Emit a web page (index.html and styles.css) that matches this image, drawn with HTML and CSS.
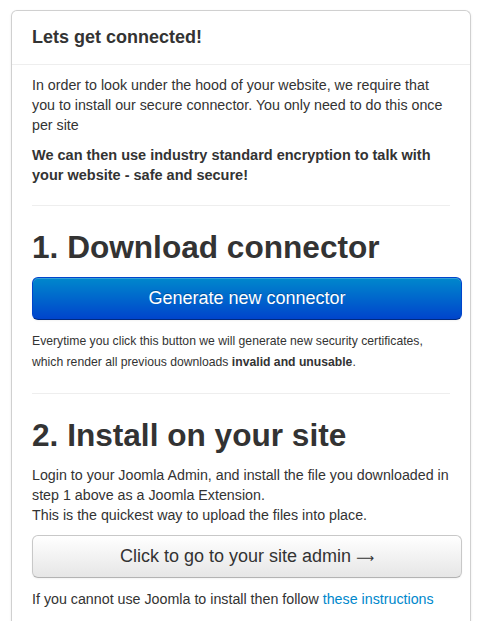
FILE: index.html
```html
<!DOCTYPE html>
<html lang="en">
<head>
    <meta charset="UTF-8">
    <meta name="viewport" content="width=device-width, initial-scale=1.0">
    <title>Lets get connected</title>
    <link rel="stylesheet" href="styles.css">
</head>
<body>
    <div class="panel">
        <div class="panel-header">Lets get connected!</div>
        <div class="panel-body">
            <p>In order to look under the hood of your website, we require that you to install our secure connector. You only need to do this once per site</p>
            <p class="strong">We can then use industry standard encryption to talk with your website - safe and secure!</p>
            <hr>
            <h1>1. Download connector</h1>
            <a href="#" class="btn btn-primary">Generate new connector</a>
            <p class="small">Everytime you click this button we will generate new security certificates, which render all previous downloads <b>invalid and unusable</b>.</p>
            <hr>
            <h1>2. Install on your site</h1>
            <p>Login to your Joomla Admin, and install the file you downloaded in step 1 above as a Joomla Extension.<br>This is the quickest way to upload the files into place.</p>
            <a href="#" class="btn">Click to go to your site admin <span class="arrow">&#10230;</span></a>
            <p class="last">If you cannot use Joomla to install then follow <a href="#" class="link">these instructions</a></p>
        </div>
    </div>
</body>
</html>
```

FILE: styles.css
```css
body {
    margin: 0;
    padding: 10px 9px 0 11px;
    font-family: "Liberation Sans", Arial, sans-serif;
    font-size: 14.25px;
    line-height: 20px;
    color: #333;
    background-color: #fff;
}
.panel {
    border: 1px solid #d0d0d0;
    border-bottom: none;
    border-radius: 6px 6px 0 0;
    box-shadow: 0 1px 3px rgba(0,0,0,0.08);
    height: 640px;
}
.panel-header {
    height: 53px;
    line-height: 53px;
    padding: 0 20px;
    font-size: 18px;
    font-weight: bold;
    border-bottom: 1px solid #eee;
}
.panel-body {
    padding: 10px 20px 0 20px;
}
p {
    margin: 0 0 10px;
}
.strong {
    font-weight: bold;
    font-size: 14.5px;
}
hr {
    border: 0;
    border-top: 1px solid #eee;
    margin: 20px 0 21px;
}
h1 {
    font-size: 31.6px;
    line-height: 40px;
    font-weight: bold;
    margin: 0 0 10px;
}
.btn {
    display: block;
    width: calc(100% + 12px);
    box-sizing: border-box;
    height: 43px;
    line-height: 41px;
    text-align: center;
    font-size: 18px;
    text-decoration: none;
    color: #333;
    border: 1px solid #c8c8c8;
    border-bottom-color: #b3b3b3;
    border-radius: 6px;
    background-image: linear-gradient(to bottom, #ffffff, #e6e6e6);
    box-shadow: inset 0 1px 0 rgba(255,255,255,0.2), 0 1px 2px rgba(0,0,0,0.05);
}
.btn-primary {
    color: #fff;
    border-color: #0044cc #0044cc #002a80;
    background-image: linear-gradient(to bottom, #0088cc, #0044cc);
    text-shadow: 0 -1px 0 rgba(0,0,0,0.25);
}
.arrow {
    font-family: "DejaVu Sans", sans-serif;
    font-size: 12.5px;
}
.small {
    font-size: 12.2px;
    line-height: 21px;
    margin-top: 11px;
    margin-bottom: 0;
}
.last {
    margin-top: 11px;
}
.link {
    color: #0088cc;
    text-decoration: none;
}
```
